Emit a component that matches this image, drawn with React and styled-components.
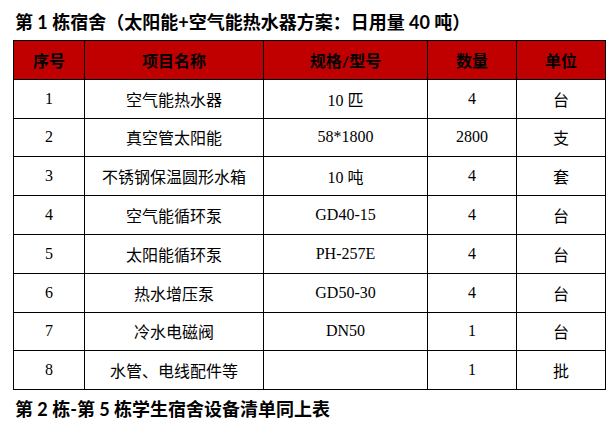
import React from "react";
import styled, { createGlobalStyle } from "styled-components";

const GlobalStyle = createGlobalStyle`
  html, body {
    margin: 0;
    padding: 0;
    background: #ffffff;
  }
`;

const rows = [
  ["1", "空气能热水器", "10 匹", "4", "台"],
  ["2", "真空管太阳能", "58*1800", "2800", "支"],
  ["3", "不锈钢保温圆形水箱", "10 吨", "4", "套"],
  ["4", "空气能循环泵", "GD40-15", "4", "台"],
  ["5", "太阳能循环泵", "PH-257E", "4", "台"],
  ["6", "热水增压泵", "GD50-30", "4", "台"],
  ["7", "冷水电磁阀", "DN50", "1", "台"],
  ["8", "水管、电线配件等", "", "1", "批"],
];

const columns = [71, 179, 164, 89, 89];
const heads = ["序号", "项目名称", "规格/型号", "数量", "单位"];

const App = () => {
  return (
    <>
      <GlobalStyle />
      <Page>
        <Title>第 1 栋宿舍（太阳能+空气能热水器方案：日用量 40 吨）</Title>
        <Table>
          <colgroup>
            {columns.map((w, i) => (
              <col key={i} style={{ width: w }} />
            ))}
          </colgroup>
          <thead>
            <Row>
              {heads.map((h) => (
                <Head key={h}>{h}</Head>
              ))}
            </Row>
          </thead>
          <tbody>
            {rows.map((r) => (
              <Row key={r[0]}>
                {r.map((c, i) => (
                  <Cell key={i}>{c}</Cell>
                ))}
              </Row>
            ))}
          </tbody>
        </Table>
        <Title $after>第 2 栋-第 5 栋学生宿舍设备清单同上表</Title>
      </Page>
    </>
  );
};

export default App;

const Page = styled.div`
  padding: 10px 0 0 13px;
  width: 592px;
`;

const Title = styled.div`
  font-family: "Lato", "Noto Sans CJK SC", sans-serif;
  font-weight: 700;
  font-size: 18px;
  line-height: 24px;
  color: #000;
  margin: ${(p) => (p.$after ? "7px 0 0 2px" : "0 0 6px 2px")};
  white-space: nowrap;
`;

const Table = styled.table`
  border-collapse: collapse;
  table-layout: fixed;
  width: 592px;
`;

const Row = styled.tr`
  height: 38.8px;
`;

const Head = styled.th`
  background: #c00000;
  border: 1px solid #000;
  font-family: "Lato", "Noto Sans CJK SC", sans-serif;
  font-weight: 700;
  font-size: 16px;
  color: #000;
  text-align: center;
  padding: 0;
`;

const Cell = styled.td`
  border: 1px solid #000;
  font-family: "Liberation Serif", "Noto Sans CJK SC", serif;
  font-weight: 400;
  font-size: 16px;
  color: #000;
  text-align: center;
  padding: 0;
`;
